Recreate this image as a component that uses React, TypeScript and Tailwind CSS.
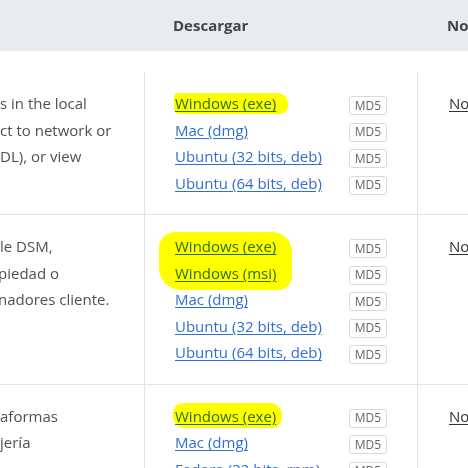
import React from "react";

type Row = {
  desc: string[];
  descShift: number[];
  links: string[];
  hl: { l: number; t: number; w: number; h: number; r: string };
};

const rows: Row[] = [
  {
    desc: ["s in the local", "ct to network or", "DL), or view"],
    descShift: [0, 0, 0],
    links: ["Windows (exe)", "Mac (dmg)", "Ubuntu (32 bits, deb)", "Ubuntu (64 bits, deb)"],
    hl: { l: 29, t: 21, w: 114, h: 21, r: "rounded-[4px_10px_8px_6px]" },
  },
  {
    desc: ["le DSM,", "piedad o", "nadores cliente."],
    descShift: [0, -2, -2],
    links: [
      "Windows (exe)",
      "Windows (msi)",
      "Mac (dmg)",
      "Ubuntu (32 bits, deb)",
      "Ubuntu (64 bits, deb)",
    ],
    hl: { l: 14, t: 17, w: 133, h: 58, r: "rounded-[16px_20px_14px_22px]" },
  },
  {
    desc: ["aformas", "jería"],
    descShift: [0, 0],
    links: ["Windows (exe)", "Mac (dmg)", "Fedora (32 bits, rpm)", "Fedora (64 bits, rpm)"],
    hl: { l: 28, t: 18, w: 109, h: 25, r: "rounded-[10px_12px_10px_12px]" },
  },
];

export default function App() {
  return (
    <div className="w-[468px] h-[468px] overflow-hidden bg-white font-['Open_Sans','Noto_Sans',sans-serif] text-[15px]">
      <div className="h-[51px] bg-[#e8ecf1] grid grid-cols-[144px_274px_1fr] items-center">
        <div />
        <div className="pl-[29px] font-bold text-[#444]">Descargar</div>
        <div className="pl-[29px] font-bold text-[#444] whitespace-nowrap">Notas de la versión</div>
      </div>
      <div className="h-[21px]" />
      {rows.map((row, i) => (
        <div key={i} className="grid grid-cols-[144px_274px_1fr] border-b border-[#e2e2e2]">
          <div className="py-[18px] overflow-hidden text-[#505050] leading-[26.5px] whitespace-nowrap">
            {row.desc.map((d, j) => (
              <div key={j} style={{ marginLeft: row.descShift[j] }}>
                {d}
              </div>
            ))}
          </div>
          <div className="relative py-[18px] pl-[30px] border-l border-r border-[#e2e2e2]">
            {row.links.map((l, j) => (
              <div key={j} className="flex items-center h-[26.5px]">
                <a className="w-[174px] text-[#2f6fd0] underline underline-offset-2 whitespace-nowrap cursor-pointer">
                  {l}
                </a>
                <span className="mt-[5px] h-[19px] w-[38px] border border-[#d9d9d9] rounded-[3px] text-[12px] text-[#666] flex items-center justify-center">
                  MD5
                </span>
              </div>
            ))}
            <div
              className={`absolute bg-[#ffff00] mix-blend-multiply ${row.hl.r}`}
              style={{ left: row.hl.l, top: row.hl.t, width: row.hl.w, height: row.hl.h }}
            />
          </div>
          <div className="py-[18px] pl-[31px] leading-[26.5px] whitespace-nowrap">
            <a className="text-[#333] underline underline-offset-2">Notas de la versión</a>
          </div>
        </div>
      ))}
    </div>
  );
}
